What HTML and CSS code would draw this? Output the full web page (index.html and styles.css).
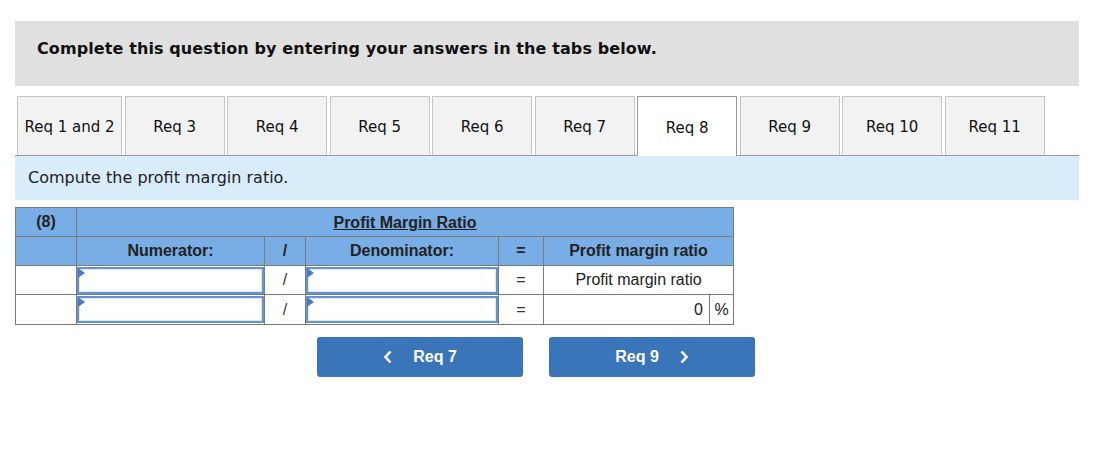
FILE: index.html
```html
<!DOCTYPE html>
<html lang="en">
<head>
  <meta charset="UTF-8">
  <title>Req 8 - Profit Margin Ratio</title>
  <link rel="stylesheet" href="styles.css">
</head>
<body>
  <div class="wrap">
    <div class="prompt">Complete this question by entering your answers in the tabs below.</div>

    <div class="tabs">
      <div class="tab">Req 1 and 2</div>
      <div class="tab">Req 3</div>
      <div class="tab">Req 4</div>
      <div class="tab">Req 5</div>
      <div class="tab">Req 6</div>
      <div class="tab">Req 7</div>
      <div class="tab active">Req 8</div>
      <div class="tab">Req 9</div>
      <div class="tab">Req 10</div>
      <div class="tab">Req 11</div>
    </div>

    <div class="instructions">Compute the profit margin ratio.</div>

    <table class="ratio">
      <colgroup>
        <col style="width: 61px">
        <col style="width: 188px">
        <col style="width: 41px">
        <col style="width: 193px">
        <col style="width: 45px">
        <col style="width: 166px">
        <col style="width: 24px">
      </colgroup>
      <tr class="head">
        <th>(8)</th>
        <th colspan="6"><u>Profit Margin Ratio</u></th>
      </tr>
      <tr class="head">
        <th></th>
        <th>Numerator:</th>
        <th>/</th>
        <th>Denominator:</th>
        <th>=</th>
        <th colspan="2">Profit margin ratio</th>
      </tr>
      <tr>
        <td></td>
        <td class="entry"><div class="field"></div></td>
        <td class="op">/</td>
        <td class="entry"><div class="field"></div></td>
        <td class="op">=</td>
        <td colspan="2" class="label">Profit margin ratio</td>
      </tr>
      <tr class="last">
        <td></td>
        <td class="entry"><div class="field"></div></td>
        <td class="op">/</td>
        <td class="entry"><div class="field"></div></td>
        <td class="op">=</td>
        <td class="num">0</td>
        <td class="unit">%</td>
      </tr>
    </table>

    <div class="nav">
      <button class="nav-btn">
        <svg class="chev" width="10" height="14" viewBox="0 0 10 14"><polyline points="7.5,1.5 2.5,7 7.5,12.5" fill="none" stroke="#fff" stroke-width="2.6"/></svg>
        Req 7
      </button>
      <button class="nav-btn">
        Req 9
        <svg class="chev right" width="10" height="14" viewBox="0 0 10 14"><polyline points="2.5,1.5 7.5,7 2.5,12.5" fill="none" stroke="#fff" stroke-width="2.6"/></svg>
      </button>
    </div>
  </div>
</body>
</html>
```

FILE: styles.css
```css
* {
  box-sizing: border-box;
}

body {
  margin: 0;
  background: #fff;
  color: #000;
  font-family: Verdana, "DejaVu Sans", sans-serif;
}

.wrap {
  padding: 21px 22px 0 15px;
}

.prompt {
  background: #e0e0e0;
  height: 65px;
  padding: 18px 0 0 22px;
  font-size: 16px;
  letter-spacing: 0.1px;
  font-weight: bold;
  color: #111;
}

.tabs {
  display: flex;
  gap: 2.5px;
  margin-top: 10px;
  padding-left: 2px;
  border-bottom: 1px solid #9b9b9b;
  height: 60px;
}

.tab {
  min-width: 100px;
  height: 59px;
  padding: 2px 6.5px 0;
  display: flex;
  align-items: center;
  justify-content: center;
  background: #f2f2f2;
  border: 1px solid #c6c6c6;
  border-bottom: none;
  font-size: 15px;
  color: #111;
  white-space: nowrap;
}

.tab.active {
  background: #fff;
  border-color: #999;
  height: 60px;
}

.instructions {
  background: #d9ecfa;
  height: 44px;
  padding: 12px 0 0 13px;
  font-size: 16px;
  color: #222;
}

.ratio {
  margin-top: 7px;
  border-collapse: collapse;
  table-layout: fixed;
  width: 718px;
  font-family: Arial, "Liberation Sans", sans-serif;
  font-size: 16px;
  color: #222;
}

.ratio th,
.ratio td {
  border: 1px solid #7b7b7b;
  height: 29px;
  padding: 0;
  text-align: center;
}

.ratio .head th {
  background: #79ade5;
  font-weight: bold;
}

.ratio .head th u {
  position: relative;
  top: 1px;
}

.ratio .last td {
  height: 30px;
}

.ratio td.entry {
  padding: 0;
}

.field {
  position: relative;
  height: 27px;
  background: #fff;
  border: 2px solid #6494cc;
  box-shadow: inset 0 0 0 1px #dde9f6;
}

.field::before {
  content: "";
  position: absolute;
  left: -1px;
  top: -1px;
  border-top: 5px solid transparent;
  border-bottom: 5px solid transparent;
  border-left: 7px solid #4a7cbf;
}

.ratio td.op {
  color: #333;
}

.ratio td.num {
  text-align: right;
  padding-right: 6px;
}

.nav {
  display: flex;
  gap: 26px;
  margin-top: 12px;
  padding-left: 302px;
}

.nav-btn {
  width: 206px;
  height: 40px;
  border: none;
  border-radius: 3px;
  background: #3a75b9;
  color: #fff;
  font-family: Arial, "Liberation Sans", sans-serif;
  font-size: 16px;
  font-weight: bold;
  display: flex;
  align-items: center;
  justify-content: center;
}

.chev {
  margin-right: 20px;
}

.chev.right {
  margin: 0 0 0 20px;
}
```
